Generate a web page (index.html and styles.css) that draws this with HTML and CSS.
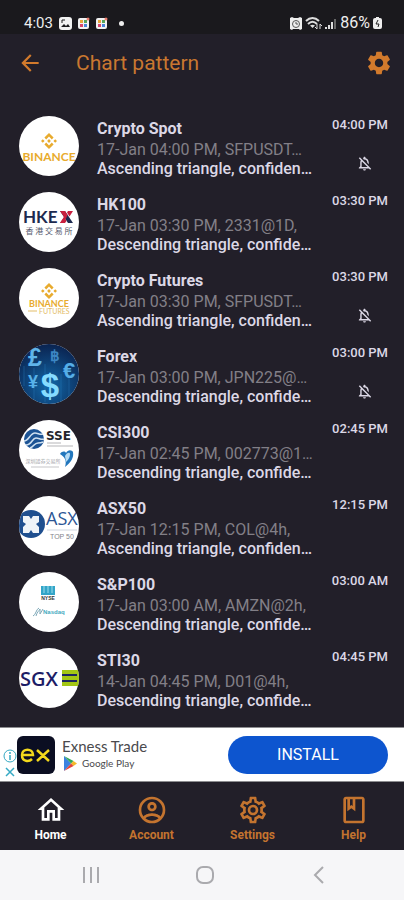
FILE: index.html
```html
<!DOCTYPE html>
<html lang="en">
<head>
    <meta charset="UTF-8">
    <meta name="viewport" content="width=device-width, initial-scale=1.0">
    <title>Chart pattern</title>
    <link rel="stylesheet" href="styles.css">
</head>
<body>
    <svg class="defs" aria-hidden="true">
        <symbol id="bell-off" viewBox="0 0 24 24">
            <path d="M12 22c1.1 0 2-.9 2-2h-4c0 1.1.9 2 2 2zm0-15.5c2.49 0 4 2.02 4 4.5v.1l2 2V11c0-3.07-1.63-5.64-4.5-6.32V4c0-.83-.67-1.5-1.5-1.5s-1.5.67-1.5 1.5v.68c-.24.06-.47.15-.69.23l1.64 1.64c.18-.02.36-.05.55-.05zM5.41 3.35L4 4.76l2.81 2.81C6.29 8.57 6 9.74 6 11v5l-2 2v1h14.24l1.74 1.74 1.41-1.41L5.41 3.35zM16 17H8v-6c0-.68.12-1.32.34-1.9L16 16.76V17z"/>
        </symbol>
        <symbol id="bnb" viewBox="0 0 16 16">
            <path d="M8 0l4.6 4.6-1.8 1.8L8 3.6 5.2 6.4 3.4 4.6zM1.8 6.2L3.6 8 1.8 9.8 0 8zM14.2 6.2L16 8l-1.8 1.8L12.4 8zM8 6.1L9.9 8 8 9.9 6.1 8zM5.2 9.6L8 12.4l2.8-2.8 1.8 1.8L8 16l-4.6-4.6z"/>
        </symbol>
        <symbol id="app" viewBox="0 0 12 12">
            <rect y="1" width="11" height="11" rx="2" fill="#f2f2f2"/>
            <rect x="2" y="3" width="3" height="3" fill="#e9a63a"/>
            <rect x="6" y="3" width="3" height="3" fill="#57a55a"/>
            <rect x="2" y="7" width="3" height="3" fill="#d8456b"/>
            <rect x="6" y="7" width="3" height="3" fill="#4a86d8"/>
            <circle cx="10" cy="2" r="1.5" fill="#ee7f70"/>
        </symbol>
    </svg>

    <div class="status">
        <span class="clock">4:03</span>
        <svg width="13" height="13" viewBox="0 0 13 13">
            <rect width="13" height="13" rx="3" fill="#f2f2f2"/>
            <path d="M2 10l3-3 2 2 2-2 2 3z" fill="#1a1a1c"/>
            <path d="M3 6V3h3" fill="none" stroke="#1a1a1c"/>
        </svg>
        <svg width="12" height="12"><use href="#app"/></svg>
        <svg width="12" height="12"><use href="#app"/></svg>
        <span class="dot"></span>
        <div class="status-right">
            <svg width="12" height="13" viewBox="0 0 12 13">
                <path d="M0 1l2-1 2 1h4l2-1 2 1v11l-2 1-1-1H3l-1 1-2-1z" fill="#eee"/>
                <circle cx="6" cy="7" r="3.5" fill="none" stroke="#555"/>
                <path d="M6 5v2h2" fill="none" stroke="#555"/>
            </svg>
            <svg width="17" height="13" viewBox="0 0 17 13">
                <path d="M1 4c4-4 9-4 13 0M3 7c3-3 6-3 9 0" fill="none" stroke="#ddd" stroke-width="2"/>
                <path d="M5 8.5c2-1 3-1 5 0L7.5 11z" fill="#ddd"/>
                <path d="M12 7v5l-2-2M15 12V7l2 2" fill="none" stroke="#ddd"/>
            </svg>
            <svg width="12" height="12" viewBox="0 0 12 12">
                <path d="M1 12v-2M4 12V8M7 12V5" stroke="#ddd" stroke-width="2"/>
                <path d="M10 12V2" stroke="#666" stroke-width="2"/>
            </svg>
            <span class="battery">86%</span>
            <svg width="9" height="12" viewBox="0 0 9 12">
                <path d="M3 0h3v1h1q2 0 2 2v7q0 2-2 2H2q-2 0-2-2V3q0-2 2-2h1z" fill="#eee"/>
                <path d="M5 3L3 7h3l-1 3" fill="none" stroke="#222"/>
            </svg>
        </div>
    </div>

    <header class="top">
        <button class="icon-btn" aria-label="Back">
            <svg width="26" height="26" viewBox="0 0 24 24" fill="currentColor"><path d="M20 11H7.83l5.59-5.59L12 4l-8 8 8 8 1.41-1.41L7.83 13H20v-2z"/></svg>
        </button>
        <h1>Chart pattern</h1>
        <button class="icon-btn" aria-label="Settings">
            <svg width="28" height="28" viewBox="0 0 24 24" fill="currentColor"><path d="M19.14 12.94c.04-.3.06-.61.06-.94 0-.32-.02-.64-.07-.94l2.03-1.58c.18-.14.23-.41.12-.61l-1.92-3.32c-.12-.22-.37-.29-.59-.22l-2.39.96c-.5-.38-1.03-.7-1.62-.94L14.4 2.81c-.04-.24-.24-.41-.48-.41h-3.84c-.24 0-.43.17-.47.41L9.25 5.35C8.66 5.59 8.12 5.92 7.63 6.29L5.24 5.33c-.22-.08-.47 0-.59.22L2.74 8.87c-.12.21-.08.47.12.61l2.03 1.58c-.05.3-.09.63-.09.94s.02.64.07.94l-2.03 1.58c-.18.14-.23.41-.12.61l1.92 3.32c.12.22.37.29.59.22l2.39-.96c.5.38 1.03.7 1.62.94l.36 2.54c.05.24.24.41.48.41h3.84c.24 0 .44-.17.47-.41l.36-2.54c.59-.24 1.13-.56 1.62-.94l2.39.96c.22.08.47 0 .59-.22l1.92-3.32c.12-.22.07-.47-.12-.61l-2.01-1.58zM12 15.6c-1.98 0-3.6-1.62-3.6-3.6s1.62-3.6 3.6-3.6 3.6 1.62 3.6 3.6-1.62 3.6-3.6 3.6z"/></svg>
        </button>
    </header>

    <main>
        <ul class="list">
            <li class="row">
                <svg class="logo" viewBox="0 0 60 60">
                    <use href="#bnb" x="22" y="17" width="16" height="16" fill="#e8ab2e"/>
                    <text class="binance" x="30" y="45" font-size="12">BINANCE</text>
                </svg>
                <div class="info">
                    <h2>Crypto Spot</h2>
                    <p class="meta">17-Jan 04:00 PM, SFPUSDT…</p>
                    <p>Ascending triangle, confiden…</p>
                </div>
                <div class="side">
                    <time>04:00 PM</time>
                    <svg class="bell"><use href="#bell-off"/></svg>
                </div>
            </li>
            <li class="row">
                <svg class="logo" viewBox="0 0 60 60">
                    <text class="hkex" x="4" y="31" font-size="17">HKE</text>
                    <path d="M41 19h5l8 12h-5z" fill="#1d2a50"/>
                    <path d="M49 19h5l-3.5 5.5-2.5-4zM41 31l4-6 2.500 4-1.500 2z" fill="#c8203f"/>
                    <path d="M41 19h5l2.500 4-3.500 8h-4l4-6z" fill="#c8203f"/>
                    <text class="cjk" x="30" y="42" font-size="8">香 港 交 易 所</text>
                </svg>
                <div class="info">
                    <h2>HK100</h2>
                    <p class="meta">17-Jan 03:30 PM, 2331@1D,</p>
                    <p>Descending triangle, confide…</p>
                </div>
                <div class="side">
                    <time>03:30 PM</time>
                </div>
            </li>
            <li class="row">
                <svg class="logo" viewBox="0 0 60 60">
                    <use href="#bnb" x="22" y="15" width="16" height="16" fill="#e8ab2e"/>
                    <text class="binance" x="30" y="39" font-size="9">BINANCE</text>
                    <path d="M9 43h9" stroke="#e3bd68"/>
                    <text class="futures" x="20" y="46" font-size="7">FUTURES</text>
                </svg>
                <div class="info">
                    <h2>Crypto Futures</h2>
                    <p class="meta">17-Jan 03:30 PM, SFPUSDT…</p>
                    <p>Ascending triangle, confiden…</p>
                </div>
                <div class="side">
                    <time>03:30 PM</time>
                    <svg class="bell"><use href="#bell-off"/></svg>
                </div>
            </li>
            <li class="row">
                <svg class="logo" viewBox="0 0 60 60">
                    <defs>
                        <radialGradient id="sea" cx="0.5" cy="0.7" r="0.7">
                            <stop offset="0" stop-color="#1268a8"/>
                            <stop offset="1" stop-color="#0a2350"/>
                        </radialGradient>
                    </defs>
                    <rect width="60" height="60" fill="url(#sea)"/>
                    <path d="M15 24v34M26 20v38M42 30v28M50 34v20M5 22v20" stroke="#2a7fc0" stroke-opacity="0.4"/>
                    <g class="coins">
                        <text x="16" y="22" font-size="25" fill="#5fb4ea">£</text>
                        <text x="36" y="17" font-size="15" fill="#3c86c4">฿</text>
                        <text x="50" y="34" font-size="22" fill="#55aee8">€</text>
                        <text x="14" y="44" font-size="18" fill="#58b2ea">¥</text>
                        <text x="31" y="53" font-size="33" fill="#86dcff">$</text>
                    </g>
                </svg>
                <div class="info">
                    <h2>Forex</h2>
                    <p class="meta">17-Jan 03:00 PM, JPN225@…</p>
                    <p>Descending triangle, confide…</p>
                </div>
                <div class="side">
                    <time>03:00 PM</time>
                    <svg class="bell"><use href="#bell-off"/></svg>
                </div>
            </li>
            <li class="row">
                <svg class="logo" viewBox="0 0 60 60">
                    <circle cx="15" cy="19" r="10" fill="#1c5394"/>
                    <path d="M5 21c5 0 6-8 11-8 3 0 5 2 8 1M7 25c6 0 6-7 10-7 3 0 5 2 8 1M11 28c4-1 4-5 8-5 2 0 3 0 5-1" fill="none" stroke="#cfe0f0" stroke-width="1.5"/>
                    <text class="sse" x="27" y="20" font-size="12">SSE</text>
                    <path d="M28 23h14M28 26h26" stroke="#b5b5b8"/>
                    <text class="cjk faint" x="24" y="43" font-size="5">深圳證券交易所</text>
                    <path d="M12 47h28" stroke="#c5c5c8"/>
                    <path d="M41 34c2-3 5-3 6-1 2-4 6-3 7-1 1 6-2 10-8 15 2-6 0-10-5-13z" fill="#2277bd"/>
                    <path d="M46 36c2-4 5-4 5-2 0 3-1 5-4 8z" fill="#b7dcf5"/>
                </svg>
                <div class="info">
                    <h2>CSI300</h2>
                    <p class="meta">17-Jan 02:45 PM, 002773@1…</p>
                    <p>Descending triangle, confide…</p>
                </div>
                <div class="side">
                    <time>02:45 PM</time>
                </div>
            </li>
            <li class="row">
                <svg class="logo" viewBox="0 0 60 60">
                    <circle cx="12" cy="28" r="14" fill="#1f4f8f"/>
                    <path d="M4 20h6l2 3 2-3h6v6l-3 2 3 3v6h-6l-2-3-2 3H4v-6l3-3-3-2z" fill="#eef3f8"/>
                    <text class="asx" x="27" y="29" font-size="18">ASX</text>
                    <path d="M28 34h30" stroke="#cfd6df"/>
                    <text class="top50" x="31" y="43" font-size="7">TOP 50</text>
                </svg>
                <div class="info">
                    <h2>ASX50</h2>
                    <p class="meta">17-Jan 12:15 PM, COL@4h,</p>
                    <p>Ascending triangle, confiden…</p>
                </div>
                <div class="side">
                    <time>12:15 PM</time>
                </div>
            </li>
            <li class="row">
                <svg class="logo" viewBox="0 0 60 60">
                    <path d="M22 14h14v9H22z" fill="#33a5c8"/>
                    <path d="M25 14v7M29 14v7M33 14v7" stroke="#9ddcec"/>
                    <text class="nyse" x="29" y="28" font-size="5">NYSE</text>
                    <path d="M14 44c3-1 3-7 6-8M17 44c1-4 3-5 4-7v5l3-5" fill="none" stroke="#7fa9b8"/>
                    <text class="nasdaq" x="24" y="42" font-size="6">Nasdaq</text>
                </svg>
                <div class="info">
                    <h2>S&amp;P100</h2>
                    <p class="meta">17-Jan 03:00 AM, AMZN@2h,</p>
                    <p>Descending triangle, confide…</p>
                </div>
                <div class="side">
                    <time>03:00 AM</time>
                </div>
            </li>
            <li class="row">
                <svg class="logo" viewBox="0 0 60 60">
                    <text class="sgx" x="1" y="38" font-size="20">SGX</text>
                    <path d="M43 22h17v16H43z" fill="#a3c614"/>
                    <path d="M43 27h15M43 33h15" stroke="#1d2660" stroke-width="2"/>
                </svg>
                <div class="info">
                    <h2>STI30</h2>
                    <p class="meta">14-Jan 04:45 PM, D01@4h,</p>
                    <p>Descending triangle, confide…</p>
                </div>
                <div class="side">
                    <time>04:45 PM</time>
                </div>
            </li>
        </ul>
    </main>

    <div class="ad">
        <div class="ad-marks">
            <svg width="14" height="14" viewBox="0 0 14 14" fill="none" stroke="#35a9c4">
                <circle cx="7" cy="7" r="6"/>
                <path d="M7 6v5M7 3v2" stroke-width="1.5"/>
            </svg>
            <svg width="10" height="10" viewBox="0 0 10 10" stroke="#35a9c4" stroke-width="1.5"><path d="M1 1l8 8M9 1l-8 8"/></svg>
        </div>
        <svg class="ad-logo" viewBox="0 0 38 38" fill="none" stroke="#f3d91c" stroke-width="2.5">
            <path d="M5 19h11c0-7-11-7-11 0 0 7 7 7 10 4M20 14l12 11M32 14L20 25"/>
        </svg>
        <div class="ad-text">
            <strong>Exness Trade</strong>
            <span class="store">
                <svg width="13" height="15" viewBox="0 0 13 15">
                    <path d="M0 0l7 7.5L0 15z" fill="#3b82e0"/>
                    <path d="M0 0l9.5 5L7 7.5z" fill="#2fa65a"/>
                    <path d="M9.5 5L13 7.5 9.5 10 7 7.5z" fill="#f3b92a"/>
                    <path d="M0 15l9.5-5L7 7.5z" fill="#e2443c"/>
                </svg>
                Google Play
            </span>
        </div>
        <button class="install">INSTALL</button>
    </div>

    <nav class="tabs">
        <a href="#" class="active">
            <svg viewBox="0 0 24 24"><path d="M12 5.69l5 4.5V18h-2v-6H9v6H7v-7.81l5-4.5M12 3L2 12h3v8h6v-6h2v6h6v-8h3L12 3z"/></svg>
            Home
        </a>
        <a href="#">
            <svg viewBox="0 0 24 24"><path d="M12 2A10 10 0 0 0 2 12A10 10 0 0 0 12 22A10 10 0 0 0 22 12A10 10 0 0 0 12 2M7.07 18.28C7.5 17.38 10.12 16.5 12 16.5C13.88 16.5 16.5 17.38 16.93 18.28C15.57 19.36 13.86 20 12 20C10.14 20 8.43 19.36 7.07 18.28M18.36 16.83C16.93 15.09 13.46 14.5 12 14.5C10.54 14.5 7.07 15.09 5.64 16.83C4.62 15.5 4 13.82 4 12C4 7.59 7.59 4 12 4C16.41 4 20 7.59 20 12C20 13.82 19.38 15.5 18.36 16.83M12 6C10.06 6 8.5 7.56 8.5 9.5C8.5 11.44 10.06 13 12 13C13.94 13 15.5 11.44 15.5 9.5C15.5 7.56 13.94 6 12 6M12 11A1.5 1.5 0 0 1 10.5 9.5A1.5 1.5 0 0 1 12 8A1.5 1.5 0 0 1 13.5 9.5A1.5 1.5 0 0 1 12 11Z"/></svg>
            Account
        </a>
        <a href="#">
            <svg viewBox="0 0 24 24"><path d="M12,8A4,4 0 0,1 16,12A4,4 0 0,1 12,16A4,4 0 0,1 8,12A4,4 0 0,1 12,8M12,10A2,2 0 0,0 10,12A2,2 0 0,0 12,14A2,2 0 0,0 14,12A2,2 0 0,0 12,10M10,22C9.75,22 9.54,21.82 9.5,21.58L9.13,18.93C8.5,18.68 7.96,18.34 7.44,17.94L4.95,18.95C4.73,19.03 4.46,18.95 4.34,18.73L2.34,15.27C2.21,15.05 2.27,14.78 2.46,14.63L4.57,12.97L4.5,12L4.57,11L2.46,9.37C2.27,9.22 2.21,8.95 2.34,8.73L4.34,5.27C4.46,5.05 4.73,4.96 4.95,5.05L7.44,6.05C7.96,5.66 8.5,5.32 9.13,5.07L9.5,2.42C9.54,2.18 9.75,2 10,2H14C14.25,2 14.46,2.18 14.5,2.42L14.87,5.07C15.5,5.32 16.04,5.66 16.56,6.05L19.05,5.05C19.27,4.96 19.54,5.05 19.66,5.27L21.66,8.73C21.79,8.95 21.73,9.22 21.54,9.37L19.43,11L19.5,12L19.43,13L21.54,14.63C21.73,14.78 21.79,15.05 21.66,15.27L19.66,18.73C19.54,18.95 19.27,19.04 19.05,18.95L16.56,17.95C16.04,18.34 15.5,18.68 14.87,18.93L14.5,21.58C14.46,21.82 14.25,22 14,22H10M11.25,4L10.88,6.61C9.68,6.86 8.62,7.5 7.85,8.39L5.44,7.35L4.69,8.65L6.8,10.2C6.4,11.37 6.4,12.64 6.8,13.8L4.68,15.36L5.43,16.66L7.86,15.62C8.63,16.5 9.68,17.14 10.87,17.38L11.24,20H12.76L13.13,17.39C14.32,17.14 15.37,16.5 16.14,15.62L18.57,16.66L19.32,15.36L17.2,13.81C17.6,12.64 17.6,11.37 17.2,10.2L19.31,8.65L18.56,7.35L16.15,8.39C15.38,7.5 14.32,6.86 13.12,6.62L12.75,4H11.25Z"/></svg>
            Settings
        </a>
        <a href="#">
            <svg viewBox="0 0 24 24"><path d="M18 2H6c-1.1 0-2 .9-2 2v16c0 1.1.9 2 2 2h12c1.1 0 2-.9 2-2V4c0-1.1-.9-2-2-2zM9 4h2v5l-1-.75L9 9V4zm9 16H6V4h1v9l3-2.25L13 13V4h5v16z"/></svg>
            Help
        </a>
    </nav>

    <div class="system">
        <button aria-label="Recent apps">
            <svg width="18" height="18" viewBox="0 0 18 18"><path d="M2 1v16M9 1v16M16 1v16"/></svg>
        </button>
        <button aria-label="Home screen">
            <svg width="18" height="18" viewBox="0 0 18 18"><rect x="1" y="1" width="16" height="16" rx="6"/></svg>
        </button>
        <button aria-label="Go back">
            <svg width="18" height="18" viewBox="0 0 18 18"><path d="M13 1L5 9l8 8"/></svg>
        </button>
    </div>
</body>
</html>
```
FILE: styles.css
```css
* {
    padding: 0;
    margin: 0;
    box-sizing: border-box;
}
body {
    display: flex;
    flex-direction: column;
    min-height: 100vh;
    background-color: #221f29;
    color: #dcd8e6;
    font-family: Roboto, "Liberation Sans", sans-serif;
}
button {
    border: none;
    background: none;
    font-family: inherit;
}
svg {
    display: block;
    flex-shrink: 0;
}
.defs {
    display: none;
}

/* phone status bar */
.status {
    display: flex;
    align-items: center;
    gap: 6px;
    padding: 14px 22px 2px 24px;
    background-color: #1a191d;
    color: #eeeeee;
    font-size: 15px;
    line-height: 18px;
}
.dot {
    width: 5px;
    height: 5px;
    margin-left: 5px;
    border-radius: 50%;
    background-color: #eeeeee;
}
.status-right {
    display: flex;
    align-items: center;
    gap: 3px;
    margin-left: auto;
}
.battery {
    font-size: 16px;
}

/* header */
.top {
    display: flex;
    align-items: center;
    padding: 14px 11px 14px 17px;
    color: #c97730;
}
.top h1 {
    flex: 1;
    margin-left: 33px;
    font-size: 21px;
    font-weight: 400;
    line-height: 30px;
}
.icon-btn {
    color: #d27a2c;
}

/* list of charts */
main {
    flex: 1;
    padding: 16px 16px 0 19px;
}
.list {
    list-style: none;
}
.row {
    display: flex;
    height: 76px;
    padding-top: 8px;
}
.logo {
    width: 60px;
    height: 60px;
    border-radius: 50%;
    background-color: #ffffff;
}
.info {
    flex: 1;
    min-width: 0;
    margin-left: 18px;
    padding-top: 2px;
    white-space: nowrap;
}
.info h2 {
    font-size: 16px;
    font-weight: 700;
    line-height: 22px;
}
.info p {
    font-size: 16px;
    font-weight: 500;
    line-height: 19px;
}
.info .meta {
    color: #827f87;
    font-weight: 400;
}
.side {
    display: flex;
    flex-direction: column;
    gap: 22px;
    padding-top: 1px;
    font-size: 13px;
    font-weight: 500;
    line-height: 16px;
}
.bell {
    width: 17px;
    height: 17px;
    margin-left: 24px;
    fill: #dcd8e6;
}

/* lettering in the round logos */
.logo text {
    font-family: "Liberation Sans", sans-serif;
}
.logo .binance {
    font-family: Lato, sans-serif;
    font-weight: 700;
    fill: #e8ab2e;
    text-anchor: middle;
}
.logo .futures {
    font-family: Lato, sans-serif;
    fill: #e3bd68;
}
.logo .hkex {
    font-family: Lato, sans-serif;
    font-weight: 700;
    fill: #1d2a50;
}
.logo .cjk {
    font-family: "Noto Sans CJK TC", sans-serif;
    fill: #555a6e;
    text-anchor: middle;
}
.logo .faint {
    fill: #a5a5aa;
}
.coins text {
    font-weight: 700;
    text-anchor: middle;
}
.logo .sse {
    font-family: "DejaVu Sans", sans-serif;
    font-weight: 700;
    fill: #25252c;
}
.logo .asx {
    font-family: "Open Sans", sans-serif;
    fill: #2c5594;
}
.logo .top50 {
    fill: #85858c;
}
.logo .nyse {
    font-weight: 700;
    fill: #333333;
    text-anchor: middle;
}
.logo .nasdaq {
    font-weight: 700;
    fill: #45aac0;
}
.logo .sgx {
    font-family: "Open Sans", sans-serif;
    font-weight: 600;
    fill: #1d1d66;
}

/* advert */
.ad {
    display: flex;
    align-items: center;
    height: 55px;
    padding: 0 16px 0 3px;
    border-top: 1px solid #8d8d90;
    border-bottom: 1px solid #8d8d90;
    background-color: #ffffff;
    color: #4a4a4d;
}
.ad-marks {
    display: flex;
    flex-direction: column;
    align-items: center;
    align-self: flex-end;
    gap: 4px;
    padding-bottom: 4px;
}
.ad-logo {
    width: 38px;
    height: 38px;
    border-radius: 6px;
    background-color: #0b0e22;
}
.ad-text {
    display: flex;
    flex-direction: column;
    margin-left: 7px;
    padding-bottom: 1px;
}
.ad-text strong {
    font-family: Lato, sans-serif;
    font-size: 15px;
    font-weight: 400;
    line-height: 18px;
}
.store {
    display: flex;
    align-items: center;
    gap: 5px;
    margin-left: 2px;
    font-family: Lato, sans-serif;
    font-size: 10px;
    line-height: 16px;
}
.install {
    width: 160px;
    height: 38px;
    margin-left: auto;
    border-radius: 19px;
    background-color: #0d55cf;
    color: #ffffff;
    font-size: 16px;
}

/* bottom navigation */
.tabs {
    display: flex;
    padding: 12px 0 6px;
}
.tabs a {
    display: flex;
    flex: 1;
    flex-direction: column;
    align-items: center;
    color: #c4742f;
    font-size: 12px;
    font-weight: 700;
    line-height: 18px;
    text-decoration: none;
}
.tabs svg {
    width: 32px;
    height: 32px;
    fill: currentColor;
}
.tabs .active {
    color: #ffffff;
}
.system {
    display: flex;
    justify-content: space-between;
    padding: 16px 76px 16px 82px;
    background-color: #f6f6f8;
}
.system svg {
    fill: none;
    stroke: #aaaaae;
    stroke-width: 2;
}
```
